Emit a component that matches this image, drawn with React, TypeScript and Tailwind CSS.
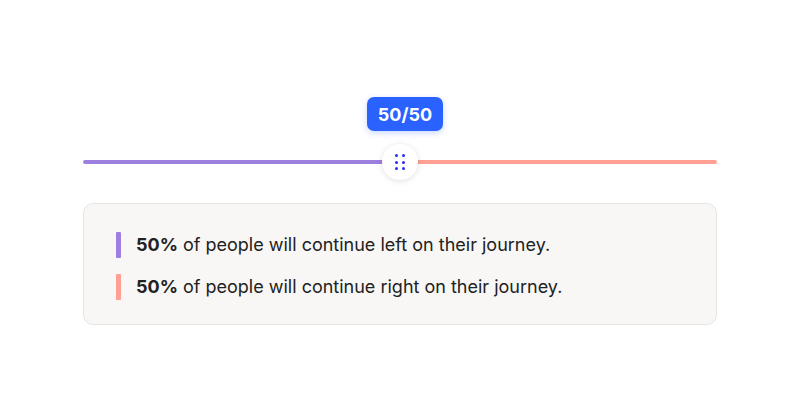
import React from "react";

export default function App() {
  return (
    <div className="w-[800px] h-[408px] bg-white" style={{ fontFamily: "Inter, 'Noto Sans', sans-serif" }}>
      <div className="w-[634px] mx-auto pt-[97px]">
        <div className="flex justify-center pl-[10px]">
          <div className="h-[34px] px-[11px] rounded-[7px] bg-[#2962ff] text-white text-[18px] font-bold flex items-center shadow-[0_2px_6px_rgba(41,98,255,0.25)]">
            50/50
          </div>
        </div>
        <div className="relative mt-[13px] h-[36px] flex items-center">
          <div className="flex-1 h-[4px] rounded-l-full bg-[#9d7fe0]" />
          <div className="flex-1 h-[4px] rounded-r-full bg-[#ffa092]" />
          <div className="absolute left-[299px] top-0 w-[36px] h-[36px] rounded-full bg-white shadow-[0_1px_6px_rgba(0,0,0,0.12)] flex items-center justify-center">
            <div className="grid grid-cols-2 gap-x-[4px] gap-y-[3.5px]">
              {Array.from({ length: 6 }).map((_, i) => (
                <div key={i} className="w-[3px] h-[3px] rounded-full bg-[#2b2bf5]" />
              ))}
            </div>
          </div>
        </div>
        <div className="mt-[23px] h-[122px] rounded-[10px] border border-[#e6e5e4] bg-[#f8f7f6] pl-[32px] pt-[27px] flex flex-col gap-[15px] text-[18px] text-[#222]">
          <div className="flex items-center gap-[15px]">
            <div className="w-[5px] h-[26px] rounded-[1px] bg-[#9d7fe0]" />
            <span><b className="font-bold">50%</b> of people will continue left on their journey.</span>
          </div>
          <div className="flex items-center gap-[15px]">
            <div className="w-[5px] h-[26px] rounded-[1px] bg-[#ffa092]" />
            <span><b className="font-bold">50%</b> of people will continue right on their journey.</span>
          </div>
        </div>
      </div>
    </div>
  );
}
